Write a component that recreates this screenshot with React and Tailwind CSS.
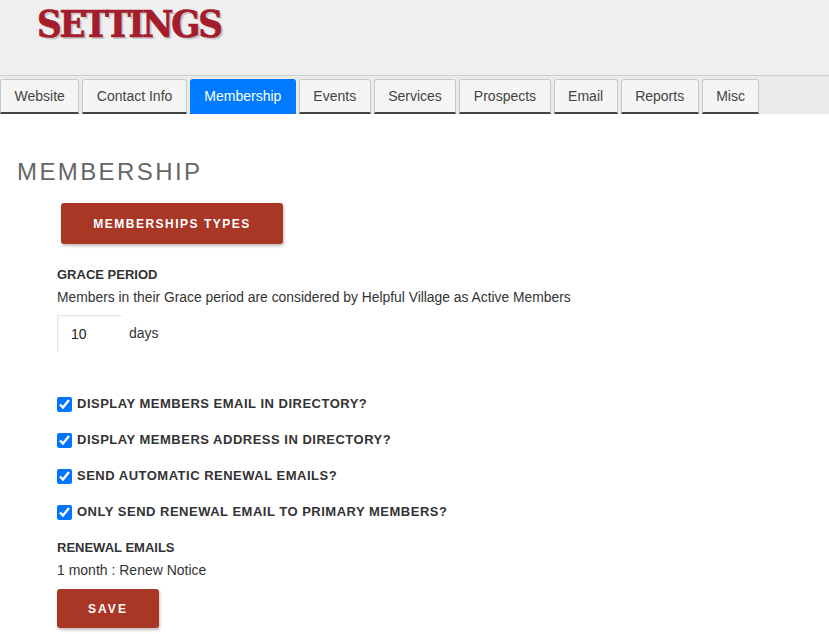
import React, { useState } from "react";

const tabs = [
  "Website",
  "Contact Info",
  "Membership",
  "Events",
  "Services",
  "Prospects",
  "Email",
  "Reports",
  "Misc",
];

const options = [
  "DISPLAY MEMBERS EMAIL IN DIRECTORY?",
  "DISPLAY MEMBERS ADDRESS IN DIRECTORY?",
  "SEND AUTOMATIC RENEWAL EMAILS?",
  "ONLY SEND RENEWAL EMAIL TO PRIMARY MEMBERS?",
];

export default function App() {
  const [active, setActive] = useState("Membership");
  const [grace, setGrace] = useState("10");
  const [checked, setChecked] = useState(options.map(() => true));

  return (
    <div className="min-h-screen bg-white font-['Liberation_Sans',Arial,sans-serif] text-[#333]">
      {/* header */}
      <div className="h-[76px] bg-[#efefef] border-b border-[#cfcfcf] pl-[37px] pt-[2px]">
        <h1 className="font-['DejaVu_Serif_Condensed','DejaVu_Serif',serif] font-bold text-[38px] leading-[44px] tracking-[-2.2px] text-[#a51c2c] [-webkit-text-stroke:0.7px_#a51c2c] [text-shadow:2px_2px_0_#c8c8c8]">
          SETTINGS
        </h1>
      </div>

      {/* tabs */}
      <div className="flex gap-[3px] bg-[#ebebeb] pt-[3px]">
        {tabs.map((t) => (
          <button
            key={t}
            onClick={() => setActive(t)}
            className={
              "h-[35px] px-[13.5px] rounded-t-[3px] border border-b-2 text-[14px] leading-[16px] " +
              (active === t
                ? "bg-[#007bff] border-[#007bff] text-white"
                : "bg-[#f5f5f5] border-[#c8c8c8] border-b-[#444] text-[#444]")
            }
          >
            {t}
          </button>
        ))}
      </div>

      {/* content */}
      <div className="pl-[17px] pt-[44px]">
        <h2 className="text-[24px] leading-[28px] tracking-[2.4px] text-[#666]">
          MEMBERSHIP
        </h2>

        <div className="pl-[40px]">
          <button className="mt-[17px] ml-[4px] w-[222px] h-[41px] rounded-[3px] bg-[#a83726] text-white text-[12px] font-bold tracking-[1.5px] shadow-[1px_2px_3px_rgba(0,0,0,0.25)]">
            MEMBERSHIPS TYPES
          </button>

          <div className="mt-[23px] text-[13px] font-bold leading-[16px]">GRACE PERIOD</div>
          <div className="mt-[6px] text-[13.85px] leading-[16px]">
            Members in their Grace period are considered by Helpful Village as Active Members
          </div>

          <div className="mt-[10px] flex items-center">
            <input
              value={grace}
              onChange={(e) => setGrace(e.target.value)}
              className="w-[64px] h-[37px] pl-[13px] text-[14px] text-[#222] outline-none border-t border-l border-[#e6e6e6] shadow-[inset_1px_1px_1px_rgba(0,0,0,0.04)]"
            />
            <span className="ml-[8px] text-[14px]">days</span>
          </div>

          <div className="mt-[44px] flex flex-col gap-[20px]">
            {options.map((o, i) => (
              <label key={o} className="flex items-center h-[16px] cursor-pointer">
                <input
                  type="checkbox"
                  checked={checked[i]}
                  onChange={() =>
                    setChecked(checked.map((c, j) => (j === i ? !c : c)))
                  }
                  className="w-[15px] h-[15px] m-0 mr-[5px] accent-[#0075ff]"
                />
                <span className="text-[13px] font-bold tracking-[0.5px] text-[#333]">{o}</span>
              </label>
            ))}
          </div>

          <div className="mt-[20px] text-[13px] font-bold leading-[16px]">RENEWAL EMAILS</div>
          <div className="mt-[6px] text-[14px] leading-[16px]">1 month : Renew Notice</div>

          <button className="mt-[11px] w-[102px] h-[39px] rounded-[3px] bg-[#a83726] text-white text-[12px] font-bold tracking-[2px] shadow-[1px_2px_3px_rgba(0,0,0,0.25)]">
            SAVE
          </button>
        </div>
      </div>
    </div>
  );
}
